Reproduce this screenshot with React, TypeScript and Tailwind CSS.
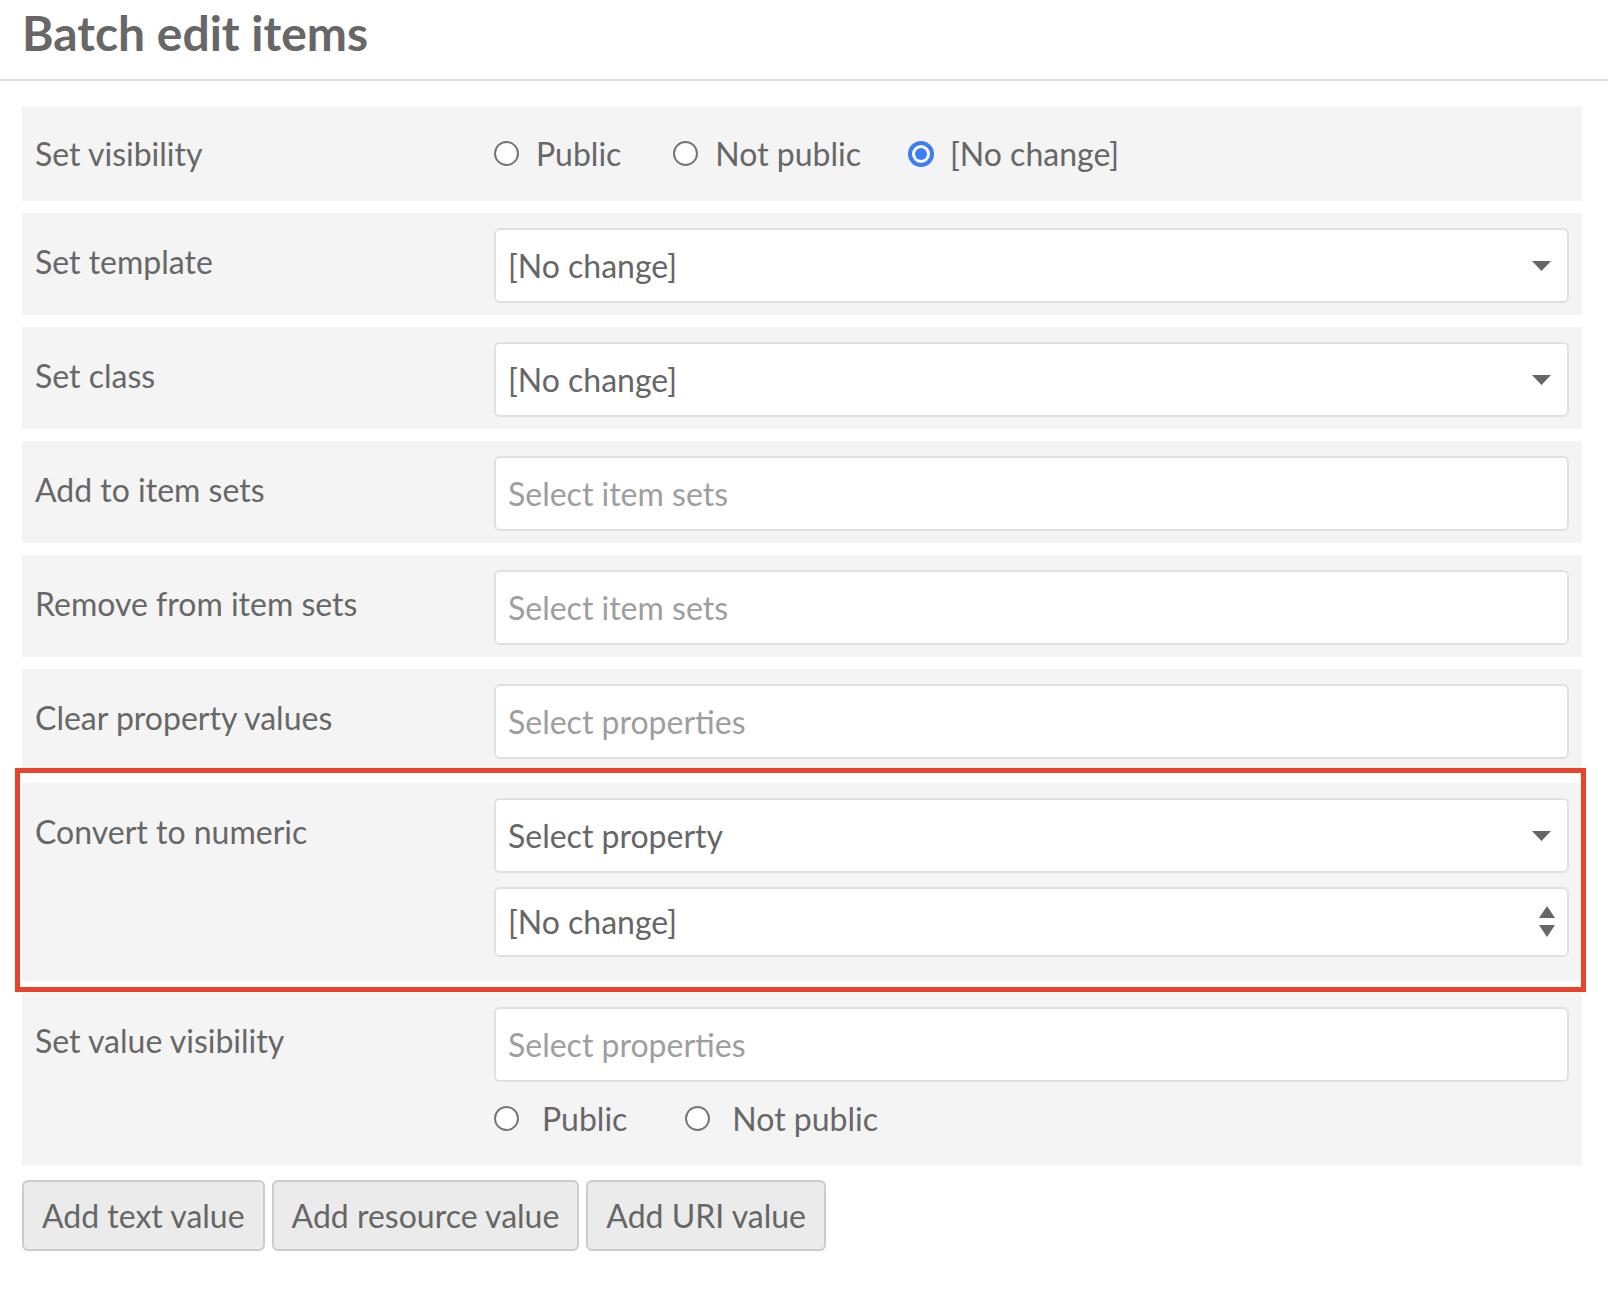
import type { ReactNode } from "react";

const Caret = () => (
  <svg width="19" height="10" viewBox="0 0 19 10" className="shrink-0">
    <polygon points="0,0 19,0 9.5,10" fill="#666666" />
  </svg>
);

const Spinner = () => (
  <svg width="16" height="32" viewBox="0 0 16 32" className="shrink-0">
    <polygon points="8,0 16,12 0,12" fill="#666666" />
    <polygon points="0,19 16,19 8,31" fill="#666666" />
  </svg>
);

const Radio = ({ checked }: { checked?: boolean }) =>
  checked ? (
    <span className="flex h-[26px] w-[26px] shrink-0 items-center justify-center rounded-full border-[4px] border-[#3d7ef6] bg-white">
      <span className="h-[12px] w-[12px] rounded-full bg-[#3d7ef6]" />
    </span>
  ) : (
    <span className="block h-[25px] w-[25px] shrink-0 rounded-full border-2 border-[#767676] bg-white" />
  );

const SelectBox = ({
  value,
  placeholder,
  icon,
  short,
}: {
  value?: string;
  placeholder?: string;
  icon?: ReactNode;
  short?: boolean;
}) => (
  <div
    className={`flex items-center justify-between rounded-[6px] border-2 border-[#e0e0e0] bg-white pl-[12px] ${
      short ? "h-[70px] pr-[12px]" : "h-[75px] pr-[16px]"
    }`}
  >
    <span className={value ? "text-[#666666]" : "text-[#9e9e9e]"}>
      {value ?? placeholder}
    </span>
    {icon}
  </div>
);

const Row = ({ label, children }: { label: string; children: ReactNode }) => (
  <div className="flex bg-[#f4f4f4] px-[13px] pt-[15px] pb-[12px]">
    <div className="w-[459px] shrink-0 pt-[11px] leading-[45px]">{label}</div>
    <div className="flex-1">{children}</div>
  </div>
);

export default function App() {
  return (
    <div className="min-h-screen bg-white font-['Lato',sans-serif] text-[32px] text-[#676767]">
      <header className="h-[81px] border-b-2 border-[#dedede] px-[22px] pt-[4px]">
        <h1 className="text-[48px] font-bold leading-[58px] text-[#676767]">
          Batch edit items
        </h1>
      </header>

      <div className="flex w-[1582px] flex-col gap-[12px] pt-[25px] pl-[22px]">
        <div className="flex h-[95px] items-center bg-[#f4f4f4] px-[13px]">
          <div className="w-[459px] shrink-0 leading-[45px]">Set visibility</div>
          <div className="flex items-center leading-[45px]">
            <Radio />
            <span className="ml-[17px]">Public</span>
            <span className="ml-[52px] flex">
              <Radio />
            </span>
            <span className="ml-[17px]">Not public</span>
            <span className="ml-[47px] flex">
              <Radio checked />
            </span>
            <span className="ml-[16px]">[No change]</span>
          </div>
        </div>

        <Row label="Set template">
          <SelectBox value="[No change]" icon={<Caret />} />
        </Row>
        <Row label="Set class">
          <SelectBox value="[No change]" icon={<Caret />} />
        </Row>
        <Row label="Add to item sets">
          <SelectBox placeholder="Select item sets" />
        </Row>
        <Row label="Remove from item sets">
          <SelectBox placeholder="Select item sets" />
        </Row>
        <Row label="Clear property values">
          <SelectBox placeholder="Select properties" />
        </Row>

        <div className="relative">
          <div className="flex bg-[#f4f4f4] px-[13px] pt-[15px] pb-[24px]">
            <div className="w-[459px] shrink-0 pt-[11px] leading-[45px]">
              Convert to numeric
            </div>
            <div className="flex flex-1 flex-col gap-[14px]">
              <SelectBox value="Select property" icon={<Caret />} />
              <SelectBox value="[No change]" icon={<Spinner />} short />
            </div>
          </div>
          <div className="pointer-events-none absolute -top-[15px] -right-[4px] -bottom-[11px] -left-[7px] border-[5px] border-[#e8442b]" />
        </div>

        <div className="flex bg-[#f4f4f4] px-[13px] pt-[14px] pb-[25px]">
          <div className="w-[459px] shrink-0 pt-[11px] leading-[45px]">
            Set value visibility
          </div>
          <div className="flex flex-1 flex-col gap-[14px]">
            <SelectBox placeholder="Select properties" />
            <div className="flex items-center leading-[45px]">
              <Radio />
              <span className="ml-[23px]">Public</span>
              <span className="ml-[58px] flex">
                <Radio />
              </span>
              <span className="ml-[22px]">Not public</span>
            </div>
          </div>
        </div>
      </div>

      <div className="flex gap-[7px] pt-[14px] pl-[22px]">
        {["Add text value", "Add resource value", "Add URI value"].map((t) => (
          <button
            key={t}
            className="h-[71px] rounded-[6px] border-2 border-[#cccccc] bg-[#ebebeb] px-[18px] text-[32px] text-[#666666]"
          >
            {t}
          </button>
        ))}
      </div>
    </div>
  );
}
